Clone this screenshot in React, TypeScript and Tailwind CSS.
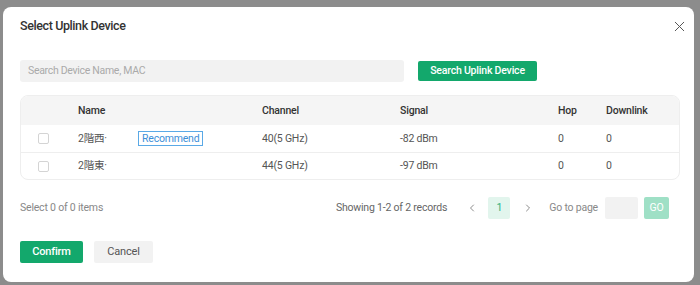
import { X, ChevronLeft, ChevronRight } from "lucide-react";

interface Row {
  name: string;
  recommend: boolean;
  channel: string;
  signal: string;
  hop: string;
  downlink: string;
}

const rows: Row[] = [
  { name: "2階西", recommend: true, channel: "40(5 GHz)", signal: "-82 dBm", hop: "0", downlink: "0" },
  { name: "2階東", recommend: false, channel: "44(5 GHz)", signal: "-97 dBm", hop: "0", downlink: "0" },
];

const cols = "grid grid-cols-[57px_184px_138px_158px_48px_1fr] items-center";

export default function App() {
  return (
    <div
      className="w-[700px] h-[285px] bg-[#8c8c8c] overflow-hidden flex text-[10.5px] text-[#444] tracking-[-0.2px]"
      style={{ fontFamily: "Roboto, 'Noto Sans CJK JP', sans-serif" }}
    >
      <div className="mt-[7px] ml-[3px] w-[691px] h-[275px] bg-white rounded-[8px] flex flex-col pl-[17px] pr-[14px]">
        <div className="h-[37px] pt-[1px] flex items-center justify-between">
          <span className="text-[12.5px] font-medium text-[#333] tracking-[-0.4px]">Select Uplink Device</span>
          <X size={17} strokeWidth={1.4} className="text-[#555] mr-[-8px]" />
        </div>

        <div className="mt-[16px] flex items-center gap-[14px]">
          <div className="w-[384px] h-[22px] rounded-[3px] bg-[#f2f2f2] flex items-center px-[8px] text-[#aaa] tracking-[-0.3px]">
            Search Device Name, MAC
          </div>
          <button className="w-[119px] h-[20px] rounded-[2px] bg-[#13a86c] text-white font-medium">
            Search Uplink Device
          </button>
        </div>

        <div className="mt-[13px] border border-[#eeeeee] rounded-[8px] overflow-hidden">
          <div className={`${cols} h-[29px] bg-[#f5f5f5] text-[#333] font-medium`}>
            <span />
            <span>Name</span>
            <span>Channel</span>
            <span>Signal</span>
            <span>Hop</span>
            <span>Downlink</span>
          </div>
          {rows.map((r, i) => (
            <div
              key={r.name}
              className={`${cols} h-[27px] text-[#555] ${i > 0 ? "border-t border-[#eeeeee]" : ""}`}
            >
              <span className="pl-[17px]">
                <span className="block w-[11px] h-[11px] border border-[#d4d4d4] rounded-[2px]" />
              </span>
              <span className="flex items-center">
                <span className="w-[60px]">{r.name}·</span>
                {r.recommend && (
                  <span className="h-[15px] px-[3px] border border-[#5aa9e6] text-[#3d8fd8] flex items-center">
                    Recommend
                  </span>
                )}
              </span>
              <span>{r.channel}</span>
              <span>{r.signal}</span>
              <span>{r.hop}</span>
              <span>{r.downlink}</span>
            </div>
          ))}
        </div>

        <div className="mt-[17px] pr-[11px] h-[22px] flex items-center justify-between">
          <span className="text-[#888]">Select 0 of 0 items</span>
          <div className="flex items-center text-[#666]">
            <span>Showing 1-2 of 2 records</span>
            <ChevronLeft size={12} strokeWidth={1.5} className="ml-[19px] text-[#666]" />
            <span className="ml-[10px] w-[22px] h-[22px] rounded-[2px] bg-[#e2f5ed] text-[#2db07c] flex items-center justify-center">
              1
            </span>
            <ChevronRight size={12} strokeWidth={1.5} className="ml-[12px] text-[#666]" />
            <span className="ml-[15px] text-[#888]">Go to page</span>
            <span className="ml-[7px] w-[33px] h-[22px] rounded-[2px] bg-[#f2f2f2]" />
            <span className="ml-[6px] w-[25px] h-[22px] rounded-[2px] bg-[#9fe0c6] text-white flex items-center justify-center">
              GO
            </span>
          </div>
        </div>

        <div className="mt-[22px] flex items-center gap-[11px]">
          <button className="w-[63px] h-[22px] rounded-[2px] bg-[#13a86c] text-white text-[11px] font-medium">
            Confirm
          </button>
          <button className="w-[59px] h-[22px] rounded-[2px] bg-[#f2f2f2] text-[#555] text-[11px]">
            Cancel
          </button>
        </div>
      </div>
    </div>
  );
}
